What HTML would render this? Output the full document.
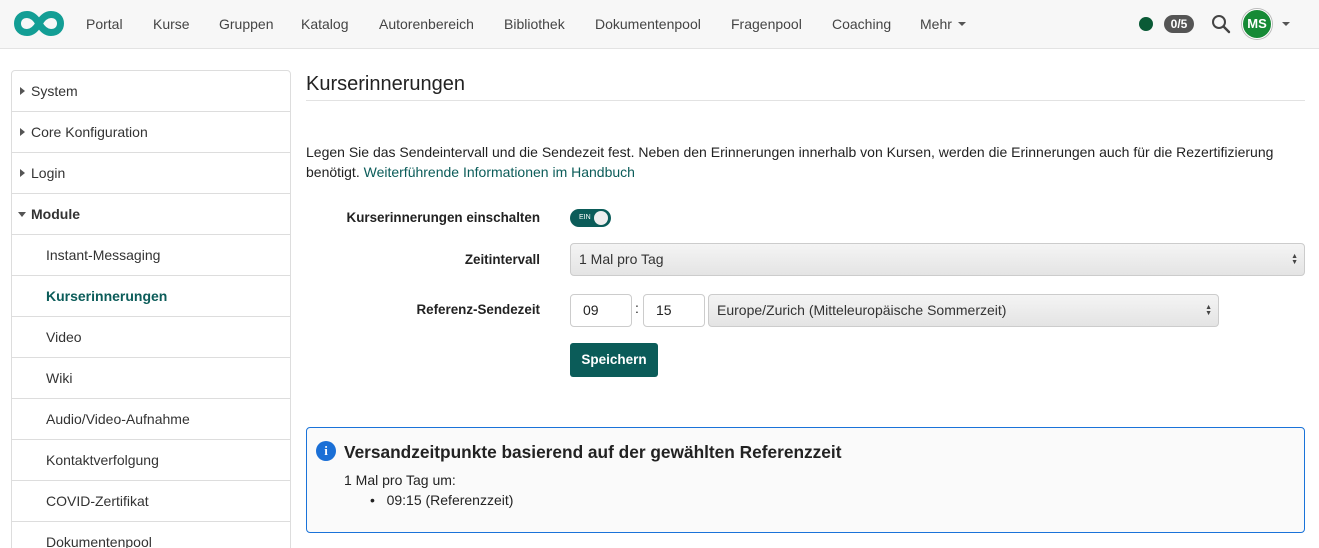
<!DOCTYPE html>
<html><head><meta charset="utf-8"><style>
*{box-sizing:border-box;margin:0;padding:0}
html,body{width:1319px;height:548px;overflow:hidden}
body{background:#fff;font-family:"Liberation Sans",sans-serif;font-size:14px;color:#222;position:relative}
.a{position:absolute;white-space:nowrap}
.nav{position:absolute;left:0;top:0;width:1319px;height:49px;background:#f7f7f7;border-bottom:1px solid #e3e3e3}
.nav .a{top:16px;font-size:14px;color:#444}
.side{position:absolute;left:11px;top:70px;width:280px;border:1px solid #ddd;border-radius:4px 4px 0 0}
.side div{height:41px;border-bottom:1px solid #ddd;line-height:40px;padding-left:19px;font-size:14px;color:#333;position:relative}
.side div.s{padding-left:34px}
.tri{position:absolute;left:8px;top:16px;width:0;height:0;border-top:4px solid transparent;border-bottom:4px solid transparent;border-left:5px solid #555}
.trd{position:absolute;left:6px;top:18px;width:0;height:0;border-left:4.5px solid transparent;border-right:4.5px solid transparent;border-top:5px solid #555}
.lbl{font-weight:bold;font-size:13.4px;color:#222;text-align:right;width:240px;left:300px}
.sel{position:absolute;border:1px solid #ccc;border-radius:4px;background:linear-gradient(#f4f4f4,#e4e4e4);font-size:14px;color:#333;padding-left:8px}
.arr{position:absolute;right:6px;top:50%;margin-top:-6px;font-size:7px;line-height:6px;color:#444}
.inp{position:absolute;border:1px solid #ccc;border-radius:4px;background:#fff;font-size:14px;padding-left:12px;line-height:30px}
</style></head><body>
<div class="nav">
<svg class="a" style="left:13px;top:10px" width="52" height="27" viewBox="0 0 52 27"><path d="M14 4.5C8 4.5 4.5 8.5 4.5 13.5S8 22.5 14 22.5C20 22.5 24 17 26 13.5C28 10 32 4.5 38 4.5S47.5 8.5 47.5 13.5 44 22.5 38 22.5C32 22.5 28 17 26 13.5C24 10 20 4.5 14 4.5Z" fill="none" stroke="#139e95" stroke-width="7"/></svg>
<span class="a" style="left:86px">Portal</span>
<span class="a" style="left:153px">Kurse</span>
<span class="a" style="left:219px">Gruppen</span>
<span class="a" style="left:301px">Katalog</span>
<span class="a" style="left:379px">Autorenbereich</span>
<span class="a" style="left:504px">Bibliothek</span>
<span class="a" style="left:595px">Dokumentenpool</span>
<span class="a" style="left:731px">Fragenpool</span>
<span class="a" style="left:832px">Coaching</span>
<span class="a" style="left:920px">Mehr</span>
<span class="a" style="left:958px;top:22px;border-left:4px solid transparent;border-right:4px solid transparent;border-top:4px solid #555"></span>
<span class="a" style="left:1139px;top:17px;width:14px;height:14px;border-radius:50%;background:#0a5a36"></span>
<span class="a" style="left:1164px;top:15px;width:30px;height:18px;border-radius:9px;background:#555;color:#fff;font-size:12px;font-weight:bold;text-align:center;line-height:18px">0/5</span>
<svg class="a" style="left:1211px;top:14px" width="20" height="20" viewBox="0 0 20 20"><circle cx="8" cy="8" r="6" fill="none" stroke="#444" stroke-width="2"/><path d="M12.5 12.5L18 18" stroke="#444" stroke-width="2.4" stroke-linecap="round"/></svg>
<span class="a" style="left:1242px;top:9px;width:30px;height:30px;border-radius:50%;background:#168a36;border:1px solid #fff;box-shadow:0 0 0 1px #bbb;color:#fff;font-size:13px;font-weight:bold;text-align:center;line-height:28px">MS</span>
<span class="a" style="left:1282px;top:22px;border-left:4px solid transparent;border-right:4px solid transparent;border-top:4px solid #555"></span>
</div>
<div class="side">
<div><span class="tri"></span>System</div>
<div><span class="tri"></span>Core Konfiguration</div>
<div><span class="tri"></span>Login</div>
<div style="font-weight:bold"><span class="trd"></span>Module</div>
<div class="s">Instant-Messaging</div>
<div class="s" style="font-weight:bold;color:#0b5c59">Kurserinnerungen</div>
<div class="s">Video</div>
<div class="s">Wiki</div>
<div class="s">Audio/Video-Aufnahme</div>
<div class="s">Kontaktverfolgung</div>
<div class="s">COVID-Zertifikat</div>
<div class="s">Dokumentenpool</div>
</div>
<span class="a" style="left:306px;top:73px;font-size:20px;color:#222">Kurserinnerungen</span>
<div class="a" style="left:306px;top:100px;width:999px;border-top:1px solid #e2e2e2"></div>
<span class="a" style="left:306px;top:144px;font-size:14px;color:#222">Legen Sie das Sendeintervall und die Sendezeit fest. Neben den Erinnerungen innerhalb von Kursen, werden die Erinnerungen auch für die Rezertifizierung</span>
<span class="a" style="left:306px;top:164px;font-size:14px;color:#222">benötigt. <span style="color:#0b5c59">Weiterführende Informationen im Handbuch</span></span>
<span class="a lbl" style="top:210px">Kurserinnerungen einschalten</span>
<span class="a" style="left:570px;top:209px;width:41px;height:18px;border-radius:9px;background:#0b5c59"><span class="a" style="left:9px;top:5px;font-size:7px;color:#fff">EIN</span><span class="a" style="left:24px;top:2px;width:14px;height:14px;border-radius:50%;background:#eee"></span></span>
<span class="a lbl" style="top:252px">Zeitintervall</span>
<div class="sel" style="left:570px;top:243px;width:735px;height:33px;line-height:31px">1 Mal pro Tag<span class="arr">▲<br>▼</span></div>
<span class="a lbl" style="top:302px">Referenz-Sendezeit</span>
<div class="inp" style="left:570px;top:294px;width:62px;height:33px">09</div>
<span class="a" style="left:635px;top:300px">:</span>
<div class="inp" style="left:643px;top:294px;width:62px;height:33px">15</div>
<div class="sel" style="left:708px;top:294px;width:511px;height:33px;line-height:31px">Europe/Zurich (Mitteleuropäische Sommerzeit)<span class="arr">▲<br>▼</span></div>
<div class="a" style="left:570px;top:343px;width:88px;height:34px;border-radius:3px;background:#0b5c59;color:#fff;font-weight:bold;font-size:13.5px;text-align:center;line-height:34px">Speichern</div>
<div class="a" style="left:306px;top:427px;width:999px;height:106px;border:1px solid #1a73d9;border-radius:4px;background:#fafafa">
<span class="a" style="left:9px;top:13px;width:20px;height:20px;border-radius:50%;background:#1a6fd6;color:#fff;font-weight:bold;font-size:13px;text-align:center;line-height:20px;font-family:'Liberation Serif',serif">i</span>
<span class="a" style="left:37px;top:14px;font-size:17.3px;font-weight:bold;color:#222">Versandzeitpunkte basierend auf der gewählten Referenzzeit</span>
<span class="a" style="left:37px;top:44px">1 Mal pro Tag um:</span>
<span class="a" style="left:63px;top:64px">•&nbsp;&nbsp;&nbsp;09:15 (Referenzzeit)</span>
</div>
</body></html>
